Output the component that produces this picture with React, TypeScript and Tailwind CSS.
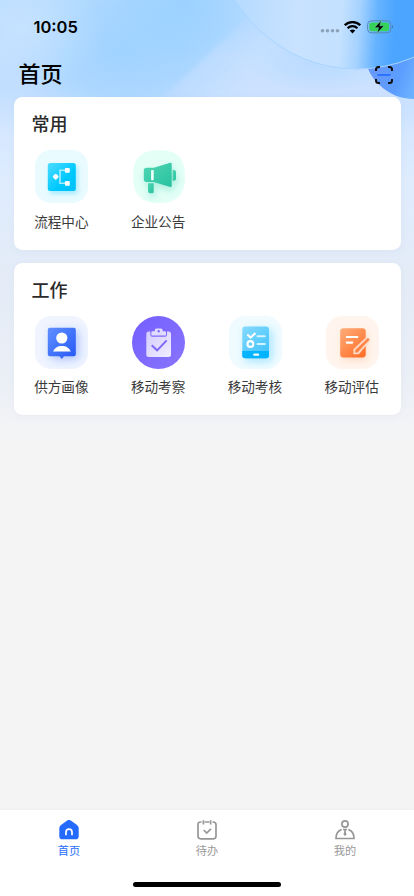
import type { ReactNode } from 'react';

type AppItem = {
  label: string;
  icon: ReactNode;
};

function FlowIcon() {
  return (
    <svg viewBox="0 0 53 53" className="h-[53px] w-[53px]">
      <defs>
        <linearGradient id="flow" x1="0" y1="0" x2="1" y2="1">
          <stop offset="0" stopColor="#4fdcff" />
          <stop offset="0.6" stopColor="#00c8ff" />
          <stop offset="1" stopColor="#00c0fa" />
        </linearGradient>
        <filter id="flowShadow" x="-50%" y="-50%" width="200%" height="200%">
          <feDropShadow dx="2" dy="3" stdDeviation="2.5" floodColor="#00c3ff" floodOpacity="0.3" />
        </filter>
      </defs>
      <rect width="53" height="53" rx="16" fill="#e9fbff" />
      <rect x="12.8" y="12.9" width="28" height="28" rx="2.5" fill="url(#flow)" filter="url(#flowShadow)" />
      <path d="M31.5 20.3H25v13h6.5" fill="none" stroke="#a5edff" strokeWidth="1.6" />
      <rect x="18.3" y="24.3" width="4.8" height="4.8" rx="1.3" transform="rotate(45 20.7 26.7)" fill="#fff" />
      <rect x="29.9" y="17.9" width="4.9" height="4.8" rx="1" fill="#fff" />
      <rect x="29.9" y="30.9" width="4.9" height="4.8" rx="1" fill="#fff" />
    </svg>
  );
}

function NoticeIcon() {
  return (
    <svg viewBox="0 0 53 53" className="h-[53px] w-[53px]">
      <defs>
        <linearGradient id="notice" x1="0" y1="0" x2="1" y2="1">
          <stop offset="0" stopColor="#52d6b3" />
          <stop offset="1" stopColor="#27c2a0" />
        </linearGradient>
        <filter id="noticeShadow" x="-50%" y="-50%" width="200%" height="200%">
          <feDropShadow dx="1.5" dy="4" stdDeviation="3" floodColor="#27c2a0" floodOpacity="0.28" />
        </filter>
      </defs>
      <path d="M27 .3C45 .3 53 8 53 26.5S45 53 27 53 1 45 1 26.5 9 .3 27 .3Z" fill="#e3fff6" />
      <g fill="url(#notice)" filter="url(#noticeShadow)">
        <path d="M14.5 17.8h7.2l16.5-5.1q1.5-.3 1.5 1.2v21.9q0 1.5-1.5 1.2l-16.5-5h-7.2q-2.7 0-2.7-2.7v-8.8q0-2.7 2.7-2.7Z" />
        <path d="M40.6 20h1.2q2.2 0 2.2 2v6.7q0 2-2.2 2h-1.2Z" />
        <path d="M16 33.2h5.7v8.5q0 1.6-1.6 1.6h-1.8q-2.3 0-2.3-2.3Z" />
      </g>
      <rect x="19.1" y="20" width="2.6" height="10.2" rx="0.8" fill="#f1fffa" />
    </svg>
  );
}

function SupplierIcon() {
  return (
    <svg viewBox="0 0 53 53" className="h-[53px] w-[53px]">
      <defs>
        <linearGradient id="supplier" x1="0" y1="0" x2="1" y2="1">
          <stop offset="0" stopColor="#6190ff" />
          <stop offset="1" stopColor="#2457f5" />
        </linearGradient>
        <filter id="supplierShadow" x="-50%" y="-50%" width="200%" height="200%">
          <feDropShadow dx="3" dy="3" stdDeviation="4" floodColor="#2e62f5" floodOpacity="0.33" />
        </filter>
      </defs>
      <rect width="53" height="53" rx="16" fill="#eff4ff" />
      <path
        d="M14.8 11.8h24q2 0 2 2v24.4q0 2-2 2H29l-2.2 2.9-2.3-2.9h-9.7q-2 0-2-2V13.8q0-2 2-2Z"
        fill="url(#supplier)"
        filter="url(#supplierShadow)"
      />
      <circle cx="26.8" cy="22" r="5.6" fill="#fff" />
      <path d="M18 35.6c1.4-3.7 4.7-5.7 8.9-5.7s7.5 2 8.9 5.7Z" fill="#fff" />
    </svg>
  );
}

function InspectIcon() {
  return (
    <svg viewBox="0 0 53 53" className="h-[53px] w-[53px]">
      <defs>
        <linearGradient id="inspectBg" x1="0" y1="0" x2="1" y2="1">
          <stop offset="0" stopColor="#755eff" />
          <stop offset="1" stopColor="#8875fc" />
        </linearGradient>
        <linearGradient id="inspect" x1="0" y1="0" x2="1" y2="1">
          <stop offset="0" stopColor="#d3ccff" />
          <stop offset="1" stopColor="#f0edff" />
        </linearGradient>
      </defs>
      <circle cx="26.5" cy="26.5" r="26.5" fill="url(#inspectBg)" />
      <path
        d="M16.8 15.6h1.6v3.3q0 1.8 1.8 1.8h13q1.8 0 1.8-1.8v-3.3h1.5q2.5 0 2.5 2.5v20.5q0 2.5-2.5 2.5H16.8q-2.5 0-2.5-2.5V18.1q0-2.5 2.5-2.5Z"
        fill="url(#inspect)"
      />
      <path
        fillRule="evenodd"
        d="M19.4 19.6v-3.3q0-1 1-1h2.4V14q0-1.5 1.5-1.5h4.8q1.5 0 1.5 1.5v1.3H33q1 0 1 1v3.3ZM26.7 14a1.2 1.2 0 1 0 0 2.4 1.2 1.2 0 0 0 0-2.4Z"
        fill="#e0dbff"
      />
      <path d="m19.7 29.2 5.4 5.1 9.6-10" fill="none" stroke="#7d68f7" strokeWidth="1.9" />
    </svg>
  );
}

function CheckIcon() {
  return (
    <svg viewBox="0 0 53 53" className="h-[53px] w-[53px]">
      <defs>
        <linearGradient id="assess" x1="0" y1="0" x2="0.7" y2="1">
          <stop offset="0" stopColor="#84daff" />
          <stop offset="1" stopColor="#43c3fc" />
        </linearGradient>
        <filter id="assessShadow" x="-50%" y="-50%" width="200%" height="200%">
          <feDropShadow dx="3" dy="3" stdDeviation="4" floodColor="#1bb7ff" floodOpacity="0.35" />
        </filter>
      </defs>
      <rect width="53" height="53" rx="16" fill="#effbff" />
      <rect x="13.3" y="10.5" width="26.7" height="31.8" rx="3" fill="url(#assess)" filter="url(#assessShadow)" />
      <path d="M13.3 35H40v4.3q0 3-3 3H16.3q-3 0-3-3Z" fill="#02b4ff" />
      <rect x="24.2" y="37.5" width="6" height="2.2" rx="1" fill="#fff" />
      <path d="m18.3 18.5 3.3 3 4.9-4.4" fill="none" stroke="#fff" strokeWidth="2.1" />
      <circle cx="21.4" cy="28" r="2.9" fill="none" stroke="#fff" strokeWidth="2.1" />
      <path d="M28.5 20.2h7.3M28.5 28h7.3" stroke="#d2f3ff" strokeWidth="2" strokeLinecap="round" />
    </svg>
  );
}

function EvaluateIcon() {
  return (
    <svg viewBox="0 0 53 53" className="h-[53px] w-[53px]">
      <defs>
        <linearGradient id="evaluate" x1="0" y1="0" x2="0.8" y2="1">
          <stop offset="0" stopColor="#ffad7b" />
          <stop offset="1" stopColor="#ff7029" />
        </linearGradient>
        <filter id="evaluateShadow" x="-50%" y="-50%" width="200%" height="200%">
          <feDropShadow dx="1.5" dy="3" stdDeviation="3.5" floodColor="#ff7833" floodOpacity="0.22" />
        </filter>
      </defs>
      <rect width="53" height="53" rx="16" fill="#fff5ee" />
      <rect x="14.2" y="12.2" width="25.5" height="29.2" rx="3.2" fill="url(#evaluate)" filter="url(#evaluateShadow)" />
      <path d="M20.7 21h10.7M20.7 26.6h5.6" stroke="#fff" strokeWidth="2.1" strokeLinecap="round" />
      {/* Pencil: pale casing, then the orange core and upper edge */}
      <path d="m40 21.2-12.6 12v5h5.4L44 25Z" fill="#ffd9c3" />
      <path d="m29.2 36.4.1-2.4 10.900-10.300 1.500 1.500-10.100 11.200Z" fill="#ff8247" />
      <path d="m39 24.8 3-3 1.700 1.700-2.900 3.200Z" fill="#ff8a52" />
    </svg>
  );
}

const commonApps: AppItem[] = [
  { label: '流程中心', icon: <FlowIcon /> },
  { label: '企业公告', icon: <NoticeIcon /> },
];

const workApps: AppItem[] = [
  { label: '供方画像', icon: <SupplierIcon /> },
  { label: '移动考察', icon: <InspectIcon /> },
  { label: '移动考核', icon: <CheckIcon /> },
  { label: '移动评估', icon: <EvaluateIcon /> },
];

function Backdrop() {
  return (
    <svg viewBox="0 0 414 450" className="absolute inset-x-0 top-0 h-[450px] w-full">
      <defs>
        <linearGradient id="sky" x1="0" y1="0" x2="0" y2="1">
          <stop offset="0" stopColor="#b9ddff" />
          <stop offset="0.2" stopColor="#c2deff" />
          <stop offset="0.3" stopColor="#d6e8ff" />
          <stop offset="0.42" stopColor="#dfecfd" />
          <stop offset="0.6" stopColor="#e3ebf7" />
          <stop offset="0.85" stopColor="#ebeff6" />
          <stop offset="0.94" stopColor="#f2f3f6" />
          <stop offset="1" stopColor="#f4f4f4" />
        </linearGradient>
        <radialGradient id="glowBlue">
          <stop offset="0" stopColor="#99d0ff" stopOpacity="0.85" />
          <stop offset="0.5" stopColor="#9dd2ff" stopOpacity="0.6" />
          <stop offset="1" stopColor="#a8d6ff" stopOpacity="0" />
        </radialGradient>
        <radialGradient id="glowLight">
          <stop offset="0" stopColor="#cbe5ff" stopOpacity="0.7" />
          <stop offset="1" stopColor="#cbe5ff" stopOpacity="0" />
        </radialGradient>
        <linearGradient id="beam" gradientUnits="userSpaceOnUse" x1="165" y1="50" x2="235" y2="105">
          <stop offset="0" stopColor="#bedcff" stopOpacity="0" />
          <stop offset="0.35" stopColor="#bddcff" stopOpacity="0.8" />
          <stop offset="1" stopColor="#cfe2ff" stopOpacity="0.7" />
        </linearGradient>
        <linearGradient id="beamFade" x1="0" y1="0" x2="0" y2="1">
          <stop offset="0" stopColor="#000" />
          <stop offset="0.5" stopColor="#fff" />
          <stop offset="0.75" stopColor="#fff" />
          <stop offset="1" stopColor="#000" />
        </linearGradient>
        <mask id="beamMask">
          <rect width="414" height="120" fill="url(#beamFade)" />
        </mask>
        <filter id="beamSoft">
          <feGaussianBlur stdDeviation="2" />
        </filter>
        <linearGradient id="bigBall" gradientUnits="userSpaceOnUse" x1="235" y1="0" x2="414" y2="12">
          <stop offset="0" stopColor="#b5dbff" />
          <stop offset="0.35" stopColor="#c8e2ff" />
          <stop offset="0.6" stopColor="#c4e1ff" />
          <stop offset="0.7" stopColor="#a5d2ff" />
          <stop offset="0.8" stopColor="#65b3ff" />
          <stop offset="0.9" stopColor="#4ca5ff" />
          <stop offset="1" stopColor="#4ca5ff" />
        </linearGradient>
        <linearGradient id="smallBall" gradientUnits="userSpaceOnUse" x1="370" y1="70" x2="414" y2="85">
          <stop offset="0" stopColor="#6898fa" />
          <stop offset="0.65" stopColor="#5b9dff" />
          <stop offset="1" stopColor="#6bb1ff" />
        </linearGradient>
      </defs>
      <rect width="414" height="450" fill="url(#sky)" />
      <ellipse cx="125" cy="50" rx="120" ry="90" fill="url(#glowBlue)" />
      <ellipse cx="185" cy="5" rx="95" ry="85" fill="url(#glowBlue)" />
      <ellipse cx="25" cy="30" rx="80" ry="60" fill="url(#glowLight)" />
      <g mask="url(#beamMask)">
        <path d="M265 0 140 120h274V0Z" fill="url(#beam)" filter="url(#beamSoft)" />
      </g>
      <ellipse cx="320" cy="62" rx="75" ry="30" fill="url(#glowBlue)" opacity="0.4" />
      <circle cx="414" cy="49" r="50" fill="url(#smallBall)" />
      <circle cx="357" cy="-73" r="142" fill="url(#bigBall)" stroke="#a9d5ff" strokeWidth="1" />
    </svg>
  );
}

function StatusBar() {
  return (
    <div className="flex h-[54px] items-center justify-between pr-[20px] pl-[33.5px]">
      <span className="font-['Inter',sans-serif] text-[16.5px] leading-none font-semibold">10:05</span>
      <div className="flex items-center">
        <svg viewBox="0 0 20 14" className="mr-[4px] h-[14px] w-[20px]" fill="#8ca2b9">
          <circle cx="2.5" cy="10.8" r="1.8" />
          <circle cx="7.5" cy="10.8" r="1.8" />
          <circle cx="12.5" cy="10.8" r="1.8" />
          <circle cx="17.5" cy="10.8" r="1.8" />
        </svg>
        <svg viewBox="0 0 17 13" className="mr-[6px] h-[13px] w-[17px]">
          <g fill="none" stroke="#000" strokeWidth="2.3">
            <path d="M.8 4.2a11 11 0 0 1 15.4 0" />
            <path d="M3.6 7.2a7 7 0 0 1 9.800 0" />
          </g>
          <path d="M5.7 9.6a4.3 4.3 0 0 1 5.600 0l-2.800 2.800Z" />
        </svg>
        <svg viewBox="0 0 27 14" className="h-[14px] w-[27px]">
          <rect x="0.6" y="0.8" width="23.2" height="12" rx="3.7" fill="none" stroke="#5486b8" />
          <rect x="2.3" y="2.4" width="19.8" height="8.8" rx="2.3" fill="#35d158" />
          <path d="M25 5.1c1.2.4 1.2 3 0 3.400Z" fill="#3d6e9f" />
          <path d="M14.3.3 7.5 7.7h4.100l-1.500 5.600L17 5.800h-4.200Z" stroke="#64ce94" strokeWidth="0.6" />
        </svg>
      </div>
    </div>
  );
}

function AppCard({ title, items }: { title: string; items: AppItem[] }) {
  return (
    <section className="h-[152.5px] rounded-[8.5px] bg-white pt-[12px] shadow-[0_2px_7px_rgba(90,110,150,0.05)]">
      <h2 className="pl-[18px] text-[18px] leading-[29px] font-medium text-[#2b2b2b]">{title}</h2>
      <div className="mt-[12px] grid grid-cols-4">
        {items.map(item => (
          <div key={item.label} className="flex flex-col items-center">
            {item.icon}
            <span className="mt-[7.5px] pr-[1px] text-[13.6px] leading-[20px] text-[#3a3a3a]">{item.label}</span>
          </div>
        ))}
      </div>
    </section>
  );
}

function HomeIcon() {
  return (
    <svg viewBox="0 0 20 20" className="h-[20px] w-[20px]">
      <path d="M8.2.5q1.8-1.1 3.6 0L18 5q1.7 1.3 1.7 3.3v7.9q0 3.1-3.1 3.1H3.4q-3.1 0-3.1-3.1V8.3q0-2 1.7-3.3Z" fill="#246bfd" />
      <path d="M7 15.3v-3.1a3 3 0 0 1 6 0v3.1" fill="none" stroke="#fff" strokeWidth="1.7" />
    </svg>
  );
}

function TodoIcon() {
  return (
    <svg viewBox="0 0 20 20" className="h-[20px] w-[20px]" fill="none" stroke="#979797" strokeWidth="1.7">
      <path d="M4.5 2h-.8Q1 2 1 4.700v11.400q0 2.700 2.700 2.700h12.600q2.700 0 2.700-2.700V4.700Q19 2 16.300 2h-.8M7.700 2h4.600M6.400.2v4.300M13.600.2v4.300" />
      <path d="m6.700 10 3 3 4.200-4.200" />
    </svg>
  );
}

function MineIcon() {
  return (
    <svg viewBox="0 0 20 20" className="h-[20px] w-[20px]" fill="none" stroke="#979797" strokeWidth="1.7">
      <circle cx="10" cy="4" r="3.1" />
      <path d="M6.6 9.6C3.2 10.7 1 14 1 18.5h18c0-4.5-2.2-7.800-5.600-8.900" />
      <path d="M8 9.500h4M10 9.500v4" />
      <path d="m10 11.500 1.700 2.800-1.700 1.800-1.700-1.800Z" fill="#979797" stroke="none" />
    </svg>
  );
}

const tabs = [
  { label: '首页', icon: <HomeIcon />, active: true },
  { label: '待办', icon: <TodoIcon />, active: false },
  { label: '我的', icon: <MineIcon />, active: false },
];

export default function App() {
  return (
    <div className="relative flex h-[896px] w-[414px] flex-col overflow-hidden bg-[#f4f4f4] font-['Noto_Sans_CJK_SC',sans-serif] text-black">
      <Backdrop />

      <div className="relative flex flex-1 flex-col">
        <StatusBar />

        {/* Header */}
        <header className="flex h-[43px] items-start justify-between pr-[20px] pl-[18.5px]">
          <h1 className="pt-[2px] text-[22px] leading-[32px] font-medium">首页</h1>
          <svg viewBox="0 0 20 20" className="mt-[11px] h-[20px] w-[20px]" fill="none" stroke="#111" strokeWidth="2">
            <path d="M6 2H4.500Q2 2 2 4.500V6M14 2h1.500Q18 2 18 4.500V6M6 18H4.500Q2 18 2 15.500V14M14 18h1.500q2.500 0 2.500-2.500V14" />
            <path d="M3.500 10h13" stroke="#286cff" strokeWidth="1.8" />
          </svg>
        </header>

        <main className="flex flex-col gap-[13px] px-[13.5px]">
          <AppCard title="常用" items={commonApps} />
          <AppCard title="工作" items={workApps} />
        </main>
      </div>

      {/* Tab bar */}
      <nav className="relative h-[86.5px] bg-white shadow-[0_-1px_3px_rgba(0,0,0,0.02)]">
        <div className="grid grid-cols-3 pt-[10px]">
          {tabs.map(tab => (
            <div key={tab.label} className="flex flex-col items-center">
              {tab.icon}
              <span className={tab.active ? 'mt-[2px] text-[11.2px] leading-[16px] text-[#246bfd]' : 'mt-[2px] text-[11.2px] leading-[16px] text-[#999]'}>
                {tab.label}
              </span>
            </div>
          ))}
        </div>
        <div className="mx-auto mt-[24px] h-[5.5px] w-[148px] rounded-full bg-black" />
      </nav>
    </div>
  );
}
